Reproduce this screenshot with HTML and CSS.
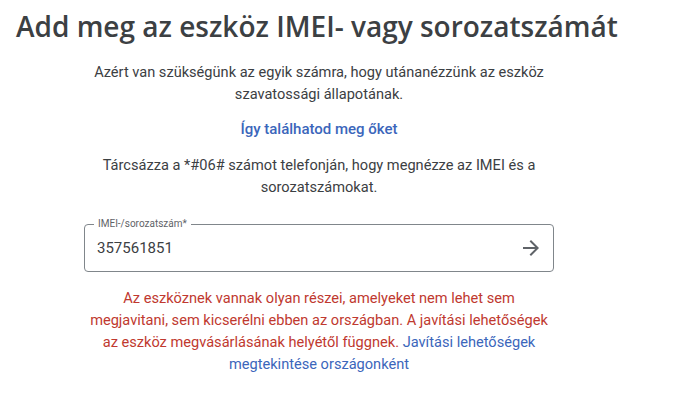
FILE: index.html
```html
<!DOCTYPE html>
<html lang="hu">
<head>
  <meta charset="UTF-8">
  <title>IMEI</title>
  <link rel="stylesheet" href="styles.css">
</head>
<body>

  <h1 class="title">Add meg az eszköz IMEI- vagy sorozatszámát</h1>

  <div class="panel">
    <p class="info">Azért van szükségünk az egyik számra, hogy utánanézzünk az eszköz szavatossági állapotának.</p>
    <a class="how" href="#">Így találhatod meg őket</a>
    <p class="info">Tárcsázza a *#06# számot telefonján, hogy megnézze az IMEI és a sorozatszámokat.</p>

    <div class="field">
      <span class="label">IMEI-/sorozatszám*</span>
      <span class="value">357561851</span>
      <svg class="arrow" width="24" height="24" viewBox="0 0 24 24">
        <path d="M12 4l-1.41 1.41L16.17 11H4v2h12.17l-5.58 5.59L12 20l8-8z" fill="#5f6368"/>
      </svg>
    </div>

    <p class="error">Az eszköznek vannak olyan részei, amelyeket nem lehet sem megjavitani, sem kicserélni ebben az országban. A javítási lehetőségek az eszköz megvásárlásának helyétől függnek. <a href="#">Javítási lehetőségek megtekintése országonként</a></p>
  </div>

</body>
</html>
```

FILE: styles.css
```css
body {
  margin: 0;
  font-family: Roboto, Arial, sans-serif;
  color: #3c4043;
  background: #fff;
}

.title {
  margin: 0;
  padding: 6px 0 0 16px;
  font-family: "Open Sans", Arial, sans-serif;
  font-size: 28px;
  font-weight: 600;
  line-height: 40px;
  color: #3c4043;
}

.panel {
  width: 470px;
  margin-left: 84px;
  margin-top: 15px;
  text-align: center;
}

.info {
  margin: 0;
  font-size: 14.6px;
  line-height: 22px;
}

.how {
  display: block;
  margin: 13px 0 14px;
  font-size: 15px;
  font-weight: 500;
  line-height: 22px;
  color: #3b66bb;
  text-decoration: none;
}

.field {
  position: relative;
  display: flex;
  align-items: center;
  height: 46px;
  margin-top: 26px;
  padding: 0 12px;
  border: 1px solid #80868b;
  border-radius: 4px;
  text-align: left;
}

.label {
  position: absolute;
  top: -7px;
  left: 9px;
  padding: 0 4px;
  background: #fff;
  font-size: 10px;
  line-height: 12px;
  color: #5f6368;
}

.value {
  flex: 1;
  font-size: 15px;
  color: #3c4043;
}

.arrow {
  margin-right: -2px;
}

.error {
  margin: 15px 0 0;
  padding: 0 4px;
  font-size: 14.6px;
  line-height: 22px;
  color: #c0392f;
}

.error a {
  color: #3b66bb;
  text-decoration: none;
}
```
